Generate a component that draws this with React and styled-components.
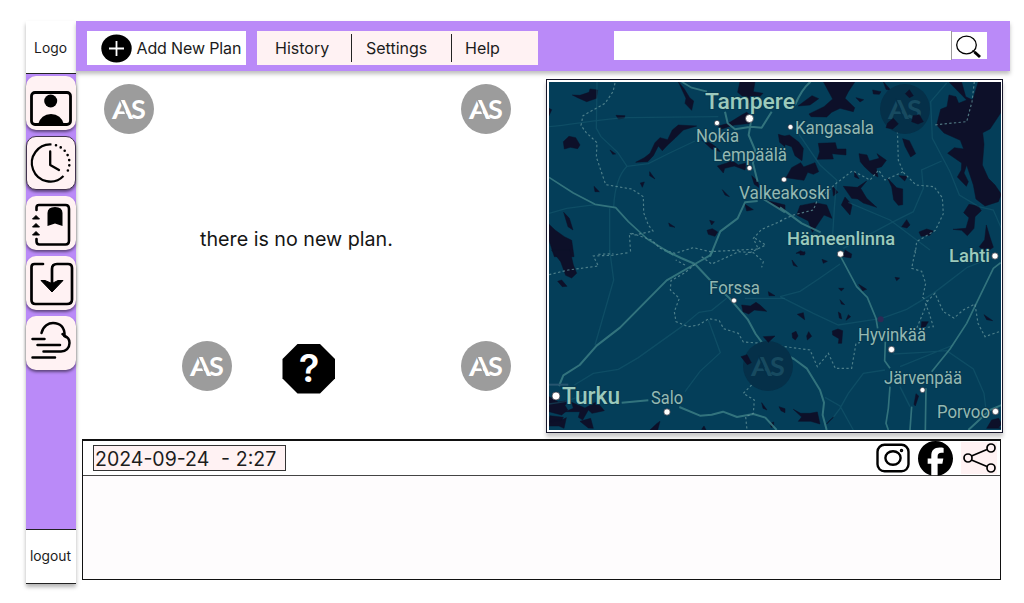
import React from "react";
import styled, { createGlobalStyle } from "styled-components";
import { FaFacebook } from "react-icons/fa6";

const Global = createGlobalStyle`
  * { box-sizing: border-box; }
  body { margin: 0; background: #fff; font-family: Inter, "Liberation Sans", sans-serif; color: #1c1c1c; }
`;

const Page = styled.div`
  width: 1024px;
  height: 603px;
  overflow: hidden;
  padding: 21px 14px 0 26px;
  display: flex;
  align-items: flex-start;
`;

const Sidebar = styled.aside`
  width: 50px;
  height: 563px;
  flex: none;
  display: flex;
  flex-direction: column;
  background: #ba8af8;
  box-shadow: 0 3px 4px rgba(0, 0, 0, 0.3);
`;

const SideLabel = styled.div`
  height: ${(p) => p.$h}px;
  flex: none;
  display: flex;
  align-items: center;
  justify-content: center;
  padding: ${(p) => (p.$topLine ? "0 1px 2px 0" : "2px 1px 0 0")};
  background: #fff;
  font-size: 13.8px;
  border-bottom: 1px solid #222;
  border-top: ${(p) => (p.$topLine ? "1px solid #222" : "0")};
`;

const SideNav = styled.nav`
  flex: 1;
  display: flex;
  flex-direction: column;
  gap: 6.5px;
  padding-top: 2px;
`;

const SideButton = styled.button`
  width: 50px;
  height: 53.5px;
  padding: 0;
  border: ${(p) => (p.$outlined ? "1px solid #43334f" : "0")};
  border-radius: 10px;
  background: #fff2f3;
  box-shadow: 0 2px 3px rgba(0, 0, 0, 0.5);
  display: flex;
  svg { margin: ${(p) => (p.$outlined ? "-1px" : "0")}; flex: none; }
`;

const Main = styled.div`
  flex: 1;
  display: flex;
  flex-direction: column;
`;

const TopBar = styled.header`
  height: 50px;
  flex: none;
  display: flex;
  align-items: flex-start;
  padding: 10px 23px 0 11px;
  background: #ba8af8;
  box-shadow: 0 3px 4px rgba(0, 0, 0, 0.25);
`;

const AddButton = styled.button`
  width: 159px;
  height: 34px;
  border: 0;
  padding: 0 0 0 14px;
  background: #fff;
  display: flex;
  align-items: center;
  gap: 4.5px;
  font: 400 16px Inter, sans-serif;
  letter-spacing: -0.13px;
  color: #1c1c1c;
  white-space: nowrap;
`;

const Menu = styled.nav`
  width: 281px;
  height: 34px;
  margin-left: 11px;
  background: #fff2f3;
  display: flex;
  align-items: center;
  font-size: 16px;
`;

const MenuItem = styled.a`
  width: ${(p) => p.$w}px;
  height: 28px;
  line-height: 28px;
  padding-left: ${(p) => p.$pad}px;
  border-right: ${(p) => (p.$divider ? "1px solid #222" : "0")};
`;

const Search = styled.div`
  width: 373px;
  height: 29px;
  margin-left: auto;
  display: flex;
`;

const SearchInput = styled.input`
  width: 338px;
  height: 29px;
  border: 0;
  border-right: 1px solid #999;
  background: #fff;
  outline: none;
`;

const SearchButton = styled.button`
  width: 35px;
  height: 27px;
  margin-top: 1px;
  padding: 0;
  border: 0;
  background: #fff;
  display: flex;
`;

const Content = styled.div`
  height: 360px;
  flex: none;
  display: flex;
  align-items: flex-start;
  padding-top: 8px;
`;

const PlanArea = styled.section`
  width: 470px;
  display: flex;
  flex-direction: column;
  padding: 5px 35px 0 28px;
`;

const BadgeRow = styled.div`
  height: 50px;
  display: flex;
  align-items: center;
  padding-left: ${(p) => p.$indent || 0}px;
  > :last-child { margin-left: auto; }
`;

const Message = styled.p`
  margin: 0;
  height: 207px;
  padding: 93px 0 0 96px;
  font-size: 19.7px;
  line-height: 24px;
  color: #151515;
`;

const HelpButton = styled.button`
  width: 54px;
  height: 52px;
  margin: 5px 0 0 50px;
  padding: 0;
  border: 0;
  background: none;
  display: flex;
`;

const MapFrame = styled.section`
  width: 457px;
  height: 354px;
  border: 1px solid #15152a;
  padding: 2px 1px 2px 2px;
  background: #fff;
  box-shadow: 0 4px 4px rgba(0, 0, 0, 0.22);
  svg { display: block; }
`;

const Panel = styled.section`
  width: 919px;
  height: 141px;
  margin: 8px 0 0 6px;
  border: 1px solid #111;
  border-top-width: 2px;
  background: #fefcfd;
  position: relative;
`;

const PanelHead = styled.div`
  height: 35px;
  display: flex;
  align-items: center;
  justify-content: space-between;
  padding: 0 3px 0 10px;
  background: #fff;
  border-bottom: 1px solid #444;
`;

const Stamp = styled.div`
  width: 193px;
  height: 26px;
  padding: 1px 0 0 1px;
  line-height: 25px;
  background: #fff2f3;
  border: 1px solid #333;
  font-size: 19.5px;
  word-spacing: 0.4px;
  white-space: pre;
`;

const Social = styled.div`
  display: flex;
  align-items: center;
  gap: 8px;
  padding-left: 1px;
  color: #000;
`;

const ShareTile = styled.span`
  width: 36px;
  height: 32px;
  display: flex;
  background: #fff2f3;
`;

const LogoText = styled.text`
  font: 700 27px Lato, sans-serif;
`;

function Badge({ fill = "#9c9c9c", ink = "#fff", ...rest }) {
  return (
    <svg width="50" height="50" viewBox="0 0 50 50" {...rest}>
      <circle cx="25" cy="25" r="25" fill={fill} />
      <LogoText fill={ink}>
        <tspan x="8" y="34.500" textLength="21" lengthAdjust="spacingAndGlyphs">A</tspan>
        <tspan x="27" y="34.500">S</tspan>
      </LogoText>
      <path d="M15.800 15L23.800 35" stroke={fill} strokeWidth="1.400" />
    </svg>
  );
}

const sideIcons = [
  <g key="person">
    <rect x="5.500" y="16.500" width="39" height="32" rx="3.500" fill="none" stroke="#000" strokeWidth="2.800" />
    <circle cx="24.700" cy="25" r="6.500" />
    <path d="M12 48.500Q15 38 25 38T38 48.500Z" />
  </g>,
  <g key="clock" fill="none" stroke="#000">
    <path d="M25.500 8.500A18.500 18.500 0 1 0 37.500 40" strokeWidth="2.200" />
    <path d="M30 9.300A18.500 18.500 0 0 1 39.500 38.500" strokeWidth="2.600" strokeLinecap="round" strokeDasharray="0 5.200" />
    <path d="M24.200 15.500V29L33 34" strokeWidth="2.300" strokeLinecap="round" strokeLinejoin="round" />
  </g>,
  <g key="journal">
    <path d="M10.500 14V11.500Q10.500 9 13 9H39.500Q43 9 43 13V44.500Q43 48.500 39.500 48.500H13.500Q10.500 48.500 10.500 45.500V43" fill="none" stroke="#000" strokeWidth="2.600" strokeLinecap="round" />
    <path d="M21.500 30V17Q21.500 11 29 11T36.500 17V30L29 27.500Z" />
    <path d="M10 19.500L13.500 23H6.500ZM10 27.500L13.500 31H6.500ZM10 35.500L13.500 39H6.500Z" stroke="#000" />
  </g>,
  <g key="download">
    <path d="M17 8H8.500Q5.500 8 5.500 11V44Q5.500 48 9.500 48H41Q46 48 46 43.500V12Q46 8 42 8H31Q26 8 26 13V32" fill="none" stroke="#000" strokeWidth="2.700" strokeLinecap="round" />
    <path d="M15 24.500H19L26 27.500L32 24.500H37L26 36Z" stroke="#000" strokeLinejoin="round" />
  </g>,
  <g key="cloud" fill="none" stroke="#000" strokeWidth="2.500" strokeLinecap="round">
    <path d="M15.500 17C17 9.500 23 7 27 7C34 7 39 11 38.500 20C42 21 43.500 24 43.500 27C43.500 32 40 35.500 35 35.500H17.500" />
    <path d="M6.500 23H18.500M11.500 29H34M6.500 41.500H29M36.500 18L40 21" />
  </g>,
];

function Tile({ x, y, children }) {
  return <g transform={`translate(${x} ${y}) scale(.33333)`}>{children}</g>;
}

const Region = styled.path`fill: #0d1029; stroke: #0d1029; stroke-width: 1.500; stroke-linejoin: round;`;
const Road = styled.path`fill: none; stroke: #3b7c84; stroke-width: ${(p) => p.$w || 5}; stroke-linejoin: round; opacity: 0.85;`;
const Minor = styled.path`fill: none; stroke: #1a6074; stroke-width: 4; opacity: 0.45;`;
const Border = styled.path`fill: none; stroke: #5f8f96; stroke-width: 3.500; stroke-dasharray: 7 7; opacity: 0.8;`;
const Place = styled.text`
  font-family: Roboto, sans-serif;
  font-weight: ${(p) => p.$weight || 400};
  font-size: ${(p) => p.$size || 18}px;
  fill: ${(p) => (p.$weight ? "#9ccabc" : "#94b8b2")};
  stroke: #06384f;
  stroke-width: 2px;
  paint-order: stroke;
`;

const places = [
  { n: "Tampere", x: 705, y: 109, w: 90, s: 22, b: 500, d: [749.5, 118.5, 4] },
  { n: "Nokia", x: 696, y: 142, w: 43, s: 18, d: [717, 123, 2.6] },
  { n: "Kangasala", x: 795, y: 134, w: 79, s: 17.5, d: [790.5, 127, 2.6] },
  { n: "Lempäälä", x: 713, y: 161, w: 74, s: 17.5, d: [749.5, 168, 2.6] },
  { n: "Valkeakoski", x: 739, y: 199, w: 91, s: 18, d: [784, 179.5, 2.6] },
  { n: "Hämeenlinna", x: 787, y: 245, w: 108, s: 18, b: 500, d: [840.5, 254, 3.2] },
  { n: "Lahti", x: 949, y: 262, w: 41, s: 18.5, b: 500, d: [995, 256, 3.2] },
  { n: "Forssa", x: 709, y: 294, w: 51, s: 17.5, d: [734, 300.5, 2.6] },
  { n: "Hyvinkää", x: 858, y: 341, w: 68, s: 18, d: [891.5, 349.5, 3.2] },
  { n: "Järvenpää", x: 884, y: 384, w: 78, s: 18, d: [922.5, 390, 2.6] },
  { n: "Turku", x: 562, y: 404, w: 58, s: 23, b: 500, d: [556, 396, 4] },
  { n: "Salo", x: 651, y: 404, w: 32, s: 17.5, d: [667, 412, 3.2] },
  { n: "Porvoo", x: 937, y: 418, w: 53, s: 18, d: [995.5, 411.5, 3.2] },
];

function RegionMap() {
  return (
    <svg width="452" height="348" viewBox="549 82 452 348">
      <rect x="549" y="82" width="452" height="348" fill="#043e59" />
      <Tile x={545} y={75}>
        <Region d="M82 60L105 61L132 52L135 42L158 45L155 70L125 80L98 68ZM213 121L240 122L238 129L220 132ZM55 200L72 184L92 188L105 210L98 221L76 217L58 222ZM272 262L298 248L315 235L330 203L345 188L368 194L382 165L400 150L455 153L415 165L390 190L368 210L352 227L340 213L325 242L308 260ZM585 20H630L625 50L654 55L635 74L620 90L600 70L578 52ZM520 153L550 145L590 120L605 112L622 125L620 145L568 150L530 162ZM400 20L418 42L434 68L446 78L440 106L420 85L423 70ZM470 195L495 203L515 217L526 230L500 222ZM517 273L546 264L560 256L580 270L604 264L600 285L568 273L539 280L535 294ZM10 446L30 465L58 485L80 496L87 545H28L10 490ZM56 412L73 430L84 465L69 455ZM486 466L502 461L518 471L510 484L490 478ZM314 290L330 312L314 302ZM286 324L298 321L292 337ZM147 334L163 350L150 350ZM494 436L508 440L500 450ZM600 388L625 404L605 408ZM532 344L553 365L540 360ZM371 444L390 457L374 454ZM700 178L720 184V215L704 202ZM660 375L720 390V412L690 395ZM620 302L637 317L645 340L628 328ZM12 100L20 104L12 122ZM195 225L212 237L203 238Z" />
        <Minor d="M12 155C90 148 160 132 250 128L520 125M156 20L154 160L168 185L218 232L246 274L310 266L374 234L450 198M246 274Q210 310 206 397M12 415L65 400L150 389M194 400V540" />
        <Road d="M12 307L85 354L150 388L212 398L250 440L307 492L385 540M410 20L440 38L486 50" />
        <Road $w={6} d="M495 545L526 469L578 430L600 382L638 378M618 140L611 180L630 225L624 265L638 320M540 110L548 145L570 163L618 155L650 158L680 110M655 372L720 412" />
        <Border d="M210 24L204 50L180 85L114 122L108 151L123 172L156 203L154 246L182 329L260 342L295 365L296 413L310 450L324 468L270 480L253 475L257 535M260 475L320 495L345 520L390 535L445 518L495 530L640 522L625 490L650 463L716 435M630 490L662 510L600 540M160 538L205 536" />
      </Tile>
      <Tile x={780} y={75}>
        <Region d="M130 20H225L205 50L195 70L224 98L220 110L180 100L155 112L140 126L93 125L87 117L132 95L158 72ZM54 93L96 62L116 71L90 90ZM228 68L251 74L240 81ZM278 45L303 50L298 58L280 57ZM310 20L335 48L318 43ZM508 22H545L557 65L578 75L595 20H668V105L630 162L608 173L612 208L607 270L625 310L645 330L664 358L655 380L615 393L588 372L580 330L560 270L552 294L565 320L559 334L532 306L544 285L545 264L503 235L523 218L551 222L541 196L492 174L470 150L482 103L501 95L507 60L528 65L536 85L560 75ZM5 185L28 180L56 201L70 220L66 257L45 242L35 215L10 206ZM115 205L166 203L171 222L198 222V240L156 236L160 252L112 253L119 230ZM18 308L35 278L62 263L71 276L105 263L116 290L100 298L83 292L72 316ZM60 392L105 383L140 390L156 430L132 420L97 472L85 438L50 420ZM237 236L261 240L268 258L298 250L291 236L319 256L305 275L289 280L294 306L276 296L254 276L241 260ZM368 191L388 197L407 236L392 246L375 214ZM323 310L350 338L368 342V389L355 391L341 374L335 336ZM190 334L232 337L260 318L242 340L260 370L290 397L250 384L233 372L215 370ZM195 366L216 390L210 420L184 390ZM519 463L558 460L567 428L551 413L567 388L595 393L604 407L585 425L582 460L562 482L545 466ZM619 450L630 487L640 517L615 534L598 515L614 494ZM365 455L380 434L390 450L381 459ZM417 471L440 462L460 468L449 481L423 484ZM357 302L382 304L374 318ZM157 333L174 352L160 363ZM223 289L237 311L224 306ZM48 535L62 527L76 535Z" />
        <Minor d="M500 24L452 80L457 190L510 290L538 360L596 395L640 405L664 460M485 258L425 285L430 340L400 410L330 445L190 520M45 160L120 270L170 315L163 400L158 480M205 382L330 435L450 525" />
        <Road $w={6} d="M92 20Q65 42 45 90M0 397L65 445L122 472" />
        <Border d="M583 20L576 80L560 140L460 150M0 438L40 420L100 405L110 380L166 327L218 287L270 315L296 285L315 315L370 290L355 256L352 160M370 292L408 330L462 335L487 368L490 416L466 466L410 500L406 535" />
      </Tile>
      <Tile x={545} y={250}>
        <Region d="M20 0H75L85 45L95 70L80 84L62 76L47 35ZM38 94L50 90L66 109L52 110ZM590 165L616 168L633 157L645 165L665 184L628 180L611 192L594 185ZM335 521L345 514L338 540H315ZM12 440L40 456L75 451L60 466L68 480L50 495L12 485ZM15 497L55 502L51 511L12 517ZM60 485L85 475L80 457L120 474L155 455L178 482L141 490L130 480L113 510L100 502L105 485ZM105 514L137 505L145 535L130 534ZM50 510L64 503L57 535L42 528H12V512ZM650 458L666 480L654 475ZM670 125L690 137L672 137ZM702 470L720 476V488L708 482ZM677 520L686 516V530L678 532ZM470 538L477 528L483 540Z" />
        <Minor d="M194 0L206 90L150 285M88 405L145 370L220 358L280 323L410 230L462 187L500 181L545 145M490 210L526 308L465 364L420 425M600 145H720M12 462L60 455L130 430" />
        <Road $w={6} d="M42 408L55 376L104 345L155 287L225 233L365 91L450 42L495 16L505 0M358 0L408 24L450 42L495 90L552 143L608 208L632 252L655 283L720 310M230 458L310 451M403 471L465 497L500 494L534 485L576 501L625 492L661 503L695 540" />
        <Border d="M12 74L70 60L160 48L145 18L200 16L250 8M450 43L420 68L378 92L376 120L403 145L388 185L393 215L430 230L460 225L492 206L523 212L536 236L580 250L595 276L655 280M420 45L392 30M470 20L500 42L560 15L580 5L625 8L655 35L650 52M620 405L595 430L628 450L625 490L602 500L606 540M685 285L665 340L630 400" />
        <path d="M12 404H70" stroke="#27556f" strokeWidth="6" />
      </Tile>
      <Tile x={780} y={250}>
        <Region d="M60 8L75 5L73 15L60 15ZM36 30L52 50L40 46ZM126 28L142 34L130 40ZM176 115H192L184 123ZM180 149L194 164L184 162ZM236 103L260 118L248 122ZM52 193L70 188L74 209ZM36 250L48 244L54 258L46 270L38 264ZM80 258L86 245L95 259L82 270ZM157 243L174 237L188 242L185 280L175 280L177 266L158 255ZM175 186L182 191L185 207L178 204ZM205 194L212 200L198 211ZM345 82L359 84L350 92ZM425 215L445 215L435 232L423 233ZM612 194L638 212L620 209ZM408 431L416 438L406 468L402 463ZM40 478L62 490H90L112 486L120 522L92 514L55 514L65 501ZM148 512L162 500L140 522ZM656 505L665 522L655 533L668 535H620L635 510ZM195 0L215 12L213 24L190 20Z" />
        <Minor d="M0 140L60 124L120 84L180 42M0 140L100 190L175 225L305 205L380 178L460 130L562 52L648 18M315 360L250 370L205 430L180 475L160 502M340 312L430 307L500 302L580 357L612 430L618 480M360 410L390 470M135 442L180 468L220 540M360 350L520 285" />
        <Road d="M182 20L230 110L262 142L288 205L293 235M316 275L314 332L330 355M330 410L325 475L318 520L325 540M395 470L390 540M438 415L436 540M455 365L510 297L560 220L640 55L662 38" />
        <Road $w={6} d="M0 305L42 327L80 355L120 420L132 458L128 495L140 540M565 540L630 480L665 465" />
        <Border d="M406 0L395 55L425 64L437 100L428 142L443 155L410 235L460 230L446 185L436 160L465 130L490 185L522 204L550 180L585 162L594 220L615 260L660 244M0 288L90 300L112 350L145 310L166 355L215 355L228 280L240 278" />
        <circle cx="302" cy="208" r="9" fill="#2d2a55" />
      </Tile>
      <Badge x={880} y={84} fill="#053049" ink="#174a60" />
      <Badge x={743} y={341} fill="#053049" ink="#174a60" />
      <Tile x={780} y={75}>
        <Region d="M323 144L340 130L355 147L338 162L318 158ZM399 122L418 119L430 140L414 147L395 140ZM376 56L388 44L400 62L388 68Z" />
      </Tile>
      <Tile x={545} y={250}>
        <Region d="M655 260L690 258L670 277ZM588 320L606 314L619 338L607 344Z" />
      </Tile>
      {places.map((p) => (
        <g key={p.n}>
          <Place x={p.x} y={p.y} textLength={p.w} lengthAdjust="spacingAndGlyphs" $size={p.s} $weight={p.b}>{p.n}</Place>
          <circle cx={p.d[0]} cy={p.d[1]} r={p.d[2]} fill="#fff" stroke="#34323d" strokeWidth=".7" />
        </g>
      ))}
    </svg>
  );
}

const OctagonMark = styled.text`font: 600 38px Inter, sans-serif; fill: #fff;`;

export default function App() {
  return (
    <Page>
      <Global />
      <Sidebar>
        <SideLabel $h={53}>Logo</SideLabel>
        <SideNav>
          {sideIcons.map((icon, i) => (
            <SideButton key={icon.key} $outlined={i === 1}>
              <svg width="50" height="54" viewBox="0 0 50 54">{icon}</svg>
            </SideButton>
          ))}
        </SideNav>
        <SideLabel $h={55} $topLine>logout</SideLabel>
      </Sidebar>
      <Main>
        <TopBar>
          <AddButton>
            <svg width="31" height="29" viewBox="0 0 31 29">
              <ellipse cx="15.500" cy="14.500" rx="15.200" ry="14" />
              <path d="M15.500 7V22M8 14.500H23" stroke="#fff" strokeWidth="1.800" />
            </svg>
            Add New Plan
          </AddButton>
          <Menu>
            <MenuItem $w={95} $pad={18} $divider>History</MenuItem>
            <MenuItem $w={100} $pad={14} $divider>Settings</MenuItem>
            <MenuItem $w={80} $pad={13}>Help</MenuItem>
          </Menu>
          <Search>
            <SearchInput aria-label="Search" />
            <SearchButton aria-label="Search">
              <svg width="35" height="27" viewBox="0 0 35 27" fill="none" stroke="#000">
                <ellipse cx="14.500" cy="13" rx="9.800" ry="8.800" strokeWidth="1.300" />
                <path d="M20.500 18.500L23 20.500" strokeWidth="1.500" />
                <path d="M22.500 20L28 25" strokeWidth="3" />
              </svg>
            </SearchButton>
          </Search>
        </TopBar>
        <Content>
          <PlanArea>
            <BadgeRow><Badge /><Badge /></BadgeRow>
            <Message>there is no new plan.</Message>
            <BadgeRow $indent={78}>
              <Badge />
              <HelpButton aria-label="Help">
                <svg width="54" height="52" viewBox="0 0 54 52">
                  <path d="M15.500 1H38L53 16V35.500L38 50.500H15.500L.5 35.500V16Z" />
                  <OctagonMark x="27" y="39" textAnchor="middle">?</OctagonMark>
                </svg>
              </HelpButton>
              <Badge />
            </BadgeRow>
          </PlanArea>
          <MapFrame><RegionMap /></MapFrame>
        </Content>
        <Panel>
          <PanelHead>
            <Stamp>2024-09-24  - 2:27</Stamp>
            <Social>
              <svg width="34" height="30" viewBox="0 0 34 30" fill="none" stroke="#000" strokeWidth="2.400">
                <rect x="1.500" y="1.800" width="31" height="26.500" rx="7" />
                <ellipse cx="17" cy="15" rx="7.600" ry="6.800" />
                <circle cx="25.500" cy="7.500" r="1" strokeWidth="1.500" />
              </svg>
              <FaFacebook size={35} preserveAspectRatio="none" height={31} />
              <ShareTile>
                <svg width="36" height="32" viewBox="0 0 36 32" fill="none" stroke="#000" strokeWidth="1.700">
                  <path d="M10.500 14L26 7.500M10.500 18L26 24.500" />
                  <circle cx="7" cy="16" r="4" />
                  <circle cx="30" cy="6" r="4" />
                  <circle cx="30" cy="26" r="4" />
                </svg>
              </ShareTile>
            </Social>
          </PanelHead>
        </Panel>
      </Main>
    </Page>
  );
}
